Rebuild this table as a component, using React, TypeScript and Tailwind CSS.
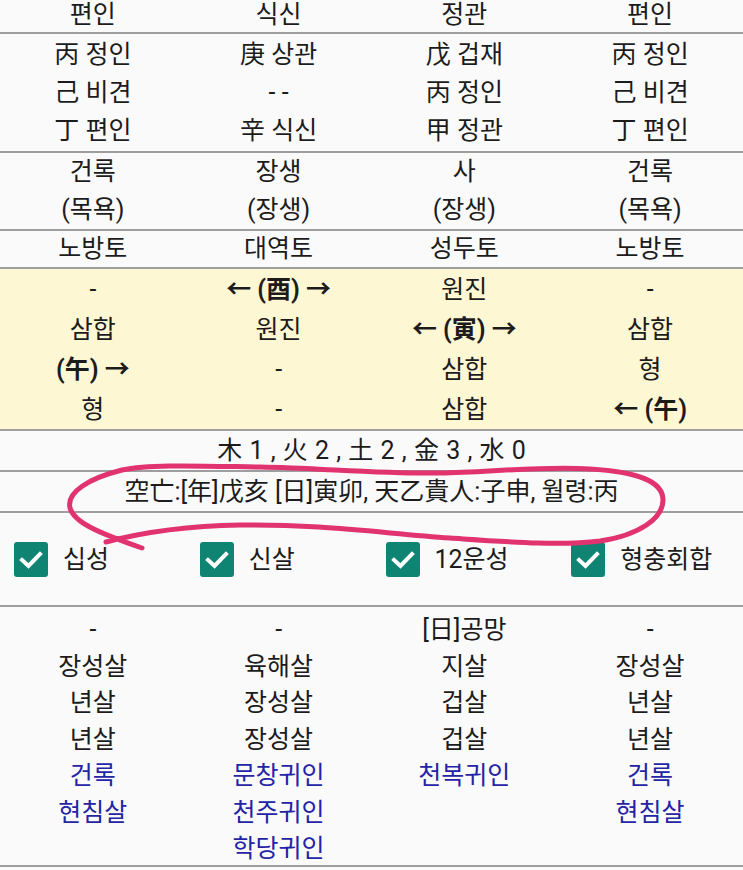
import React from "react";

const font = { fontFamily: 'Roboto, "Noto Sans CJK KR", "Noto Sans", sans-serif' };

type Cell = { t: string; b?: boolean; blue?: boolean }[];

function Col({ items, lh }: { items: Cell; lh: string }) {
  return (
    <div className="flex flex-col items-center">
      {items.map((it, i) => (
        <div
          key={i}
          className={`${lh} whitespace-pre ${it.b ? "font-bold" : "font-normal"} ${it.blue ? "text-[#2424a6]" : "text-[#1c1c1c]"}`}
        >
          {it.t}
        </div>
      ))}
    </div>
  );
}

const s = (...a: string[]): Cell => a.map((t) => ({ t }));

function Check() {
  return (
    <div className="w-[34px] h-[35px] rounded-[3px] bg-[#108472] flex items-center justify-center shrink-0">
      <svg width="24" height="20" viewBox="0 0 24 20">
        <path d="M3 10 L9.5 16 L21 4" fill="none" stroke="white" strokeWidth="4" strokeLinecap="square" />
      </svg>
    </div>
  );
}

export default function App() {
  const sep = "border-b-2 border-[#9e9e9e]";
  return (
    <div className="relative w-[743px] h-[870px] overflow-hidden bg-[#fafafa] text-[25px]" style={font}>
      {/* row 1 */}
      <div className={`grid grid-cols-4 h-[34px] ${sep}`}>
        {["편인", "식신", "정관", "편인"].map((t, i) => (
          <Col key={i} items={s(t)} lh="leading-[30px]" />
        ))}
      </div>
      {/* row 2 */}
      <div className={`grid grid-cols-4 h-[119px] pt-[2px] ${sep}`}>
        <Col items={s("丙 정인", "己 비견", "丁 편인")} lh="leading-[38px]" />
        <Col items={s("庚 상관", "- -", "辛 식신")} lh="leading-[38px]" />
        <Col items={s("戊 겁재", "丙 정인", "甲 정관")} lh="leading-[38px]" />
        <Col items={s("丙 정인", "己 비견", "丁 편인")} lh="leading-[38px]" />
      </div>
      {/* row 3 */}
      <div className={`grid grid-cols-4 h-[78px] ${sep}`}>
        <Col items={s("건록", "(목욕)")} lh="leading-[38px]" />
        <Col items={s("장생", "(장생)")} lh="leading-[38px]" />
        <Col items={s("사", "(장생)")} lh="leading-[38px]" />
        <Col items={s("건록", "(목욕)")} lh="leading-[38px]" />
      </div>
      {/* row 4 */}
      <div className={`grid grid-cols-4 h-[38px] ${sep}`}>
        {["노방토", "대역토", "성두토", "노방토"].map((t, i) => (
          <Col key={i} items={s(t)} lh="leading-[36px]" />
        ))}
      </div>
      {/* yellow */}
      <div className={`grid grid-cols-4 h-[162px] pt-[1px] bg-[#fef7d3] ${sep}`}>
        <Col items={[{ t: "-" }, { t: "삼합" }, { t: "(午) →", b: true }, { t: "형" }]} lh="leading-[40px]" />
        <Col items={[{ t: "← (酉) →", b: true }, { t: "원진" }, { t: "-" }, { t: "-" }]} lh="leading-[40px]" />
        <Col items={[{ t: "원진" }, { t: "← (寅) →", b: true }, { t: "삼합" }, { t: "삼합" }]} lh="leading-[40px]" />
        <Col items={[{ t: "-" }, { t: "삼합" }, { t: "형" }, { t: "← (午)", b: true }]} lh="leading-[40px]" />
      </div>
      {/* elements */}
      <div className={`h-[41px] pt-[1px] text-center leading-[38px] text-[#1c1c1c] [word-spacing:1px] ${sep}`}>
        木 1 , 火 2 , 土 2 , 金 3 , 水 0
      </div>
      <div className={`h-[41px] pt-[1px] text-center leading-[38px] text-[#1c1c1c] ${sep}`}>
        空亡:[年]戊亥 [日]寅卯, 天乙貴人:子申, 월령:丙
      </div>
      {/* checkboxes */}
      <div className={`grid grid-cols-4 h-[94px] pt-[29px] ${sep}`}>
        {["십성", "신살", "12운성", "형충회합"].map((t, i) => (
          <div key={i} className="flex items-center gap-[15px] pl-[14px] h-[35px]">
            <Check />
            <span className="text-[#1c1c1c] leading-[35px]">{t}</span>
          </div>
        ))}
      </div>
      {/* bottom */}
      <div className={`grid grid-cols-4 h-[260px] pt-[5px] ${sep}`}>
        <Col
          items={[{ t: "-" }, { t: "장성살" }, { t: "년살" }, { t: "년살" }, { t: "건록", blue: true }, { t: "현침살", blue: true }]}
          lh="leading-[36.5px]"
        />
        <Col
          items={[
            { t: "-" },
            { t: "육해살" },
            { t: "장성살" },
            { t: "장성살" },
            { t: "문창귀인", blue: true },
            { t: "천주귀인", blue: true },
            { t: "학당귀인", blue: true },
          ]}
          lh="leading-[36.5px]"
        />
        <Col
          items={[{ t: "[日]공망" }, { t: "지살" }, { t: "겁살" }, { t: "겁살" }, { t: "천복귀인", blue: true }]}
          lh="leading-[36.5px]"
        />
        <Col
          items={[{ t: "-" }, { t: "장성살" }, { t: "년살" }, { t: "년살" }, { t: "건록", blue: true }, { t: "현침살", blue: true }]}
          lh="leading-[36.5px]"
        />
      </div>

      {/* hand-drawn annotation */}
      <svg className="absolute left-0 top-0 pointer-events-none" width="743" height="870" viewBox="0 0 743 870">
        <path
          d="M106 542 C140 533,180 526,240 525 C320 524,380 533,450 538 C510 542,560 546,600 541 C640 535,663 518,663 500 C663 482,640 472,590 469 C540 466,490 472,440 473 C380 474,320 468,260 467 C200 466,150 464,122 470 C90 478,66 492,70 508 C74 522,96 532,142 548"
          fill="none"
          stroke="#e1336f"
          strokeWidth="5"
          strokeLinecap="round"
          strokeLinejoin="round"
        />
      </svg>
    </div>
  );
}
